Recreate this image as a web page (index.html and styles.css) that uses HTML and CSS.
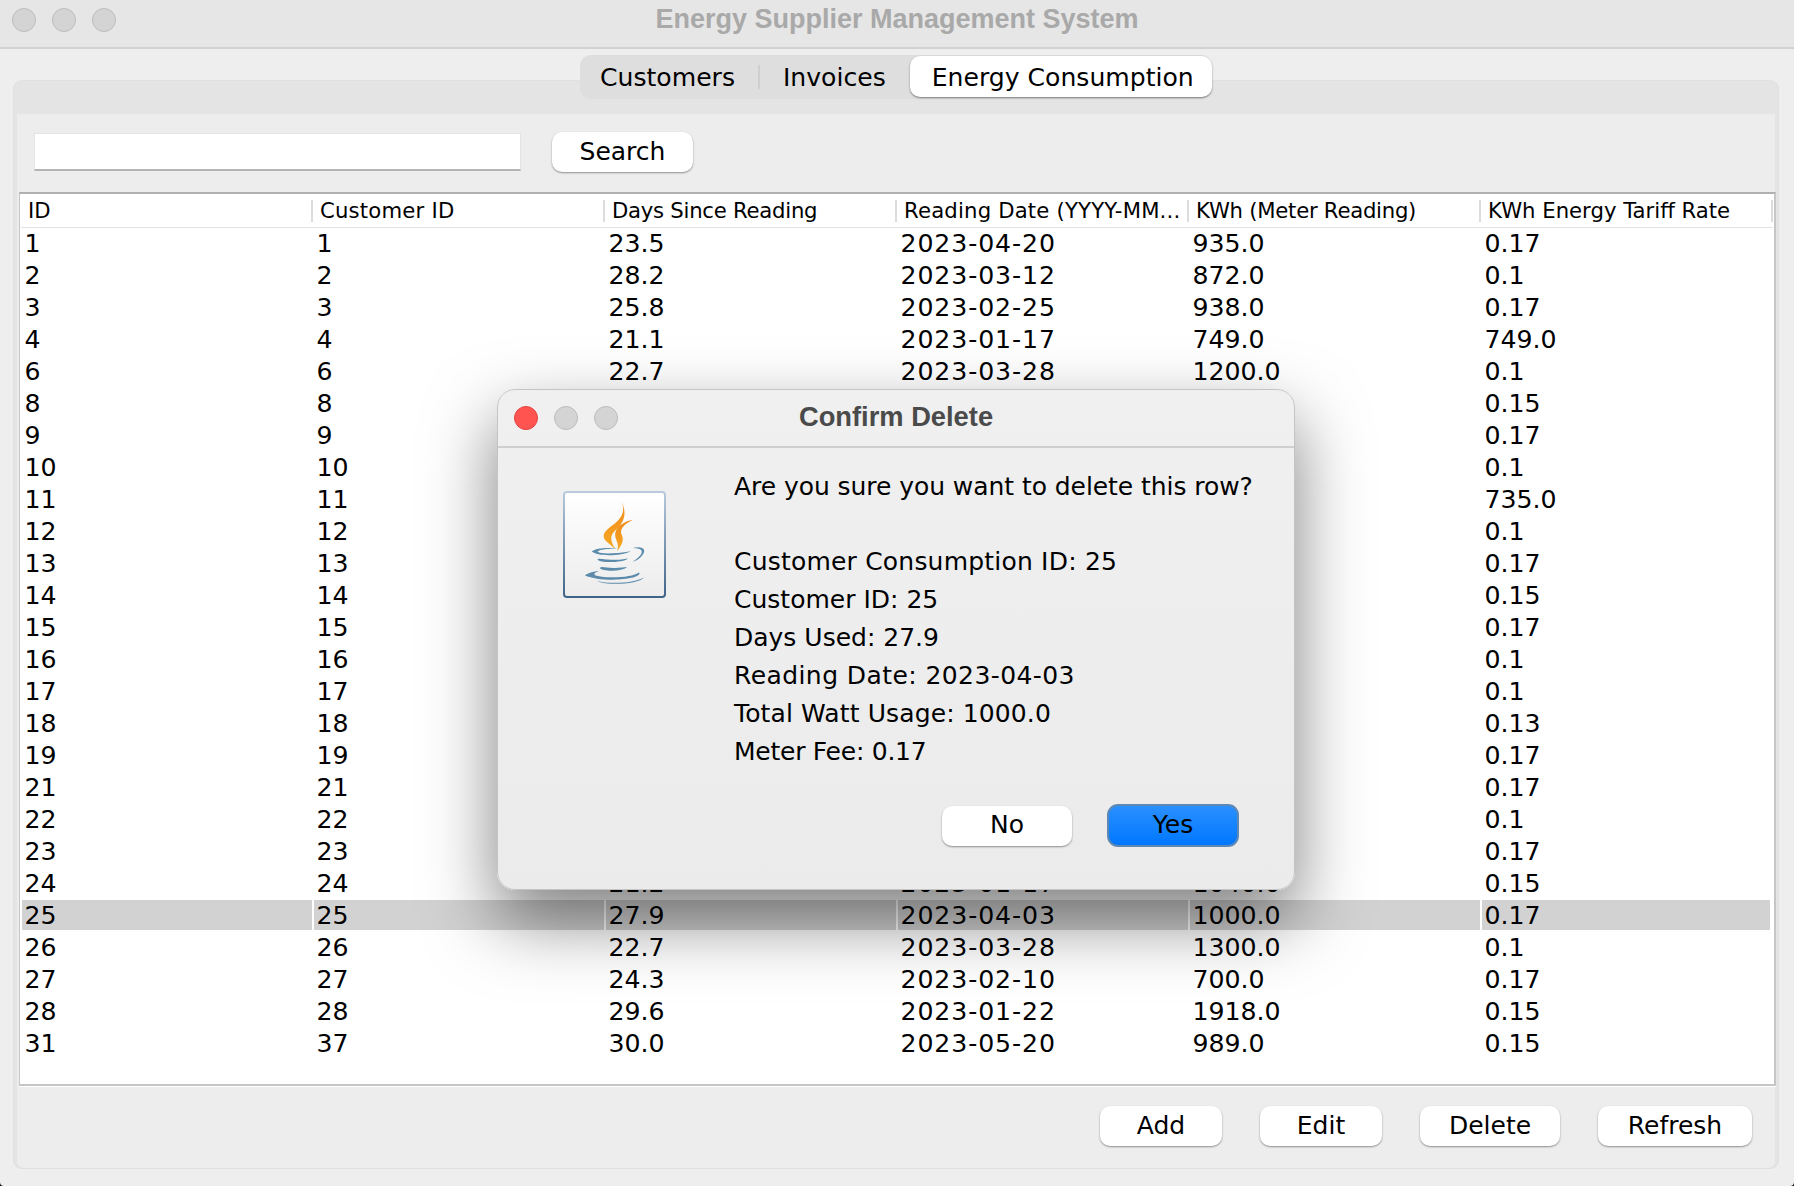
FILE: index.html
```html
<!DOCTYPE html>
<html lang="en">
<head>
<meta charset="utf-8">
<title>Energy Supplier Management System</title>
<link rel="stylesheet" href="styles.css">
</head>
<body>
<div class="window">
  <header class="titlebar">
    <div class="lights"><i class="light"></i><i class="light"></i><i class="light"></i></div>
    <div class="title">Energy Supplier Management System</div>
  </header>
  <div class="content">
    <nav class="tabs">
      <span class="tab">Customers</span>
      <span class="tab-sep"></span>
      <span class="tab">Invoices</span>
      <span class="tab active">Energy Consumption</span>
    </nav>
    <section class="panel">
      <div class="inner">
        <div class="searchbar">
          <div class="input"></div>
          <button class="btn search">Search</button>
        </div>
        <div class="tablewrap">
          <table class="grid">
            <thead>
              <tr><th>ID</th><th>Customer ID</th><th>Days Since Reading</th><th>Reading Date (YYYY-MM...</th><th>KWh (Meter Reading)</th><th>KWh Energy Tariff Rate</th></tr>
            </thead>
            <tbody>
              <tr><td>1</td><td>1</td><td>23.5</td><td>2023-04-20</td><td>935.0</td><td>0.17</td></tr>
              <tr><td>2</td><td>2</td><td>28.2</td><td>2023-03-12</td><td>872.0</td><td>0.1</td></tr>
              <tr><td>3</td><td>3</td><td>25.8</td><td>2023-02-25</td><td>938.0</td><td>0.17</td></tr>
              <tr><td>4</td><td>4</td><td>21.1</td><td>2023-01-17</td><td>749.0</td><td>749.0</td></tr>
              <tr><td>6</td><td>6</td><td>22.7</td><td>2023-03-28</td><td>1200.0</td><td>0.1</td></tr>
              <tr><td>8</td><td>8</td><td></td><td></td><td></td><td>0.15</td></tr>
              <tr><td>9</td><td>9</td><td></td><td></td><td></td><td>0.17</td></tr>
              <tr><td>10</td><td>10</td><td></td><td></td><td></td><td>0.1</td></tr>
              <tr><td>11</td><td>11</td><td></td><td></td><td></td><td>735.0</td></tr>
              <tr><td>12</td><td>12</td><td></td><td></td><td></td><td>0.1</td></tr>
              <tr><td>13</td><td>13</td><td></td><td></td><td></td><td>0.17</td></tr>
              <tr><td>14</td><td>14</td><td></td><td></td><td></td><td>0.15</td></tr>
              <tr><td>15</td><td>15</td><td></td><td></td><td></td><td>0.17</td></tr>
              <tr><td>16</td><td>16</td><td></td><td></td><td></td><td>0.1</td></tr>
              <tr><td>17</td><td>17</td><td></td><td></td><td></td><td>0.1</td></tr>
              <tr><td>18</td><td>18</td><td></td><td></td><td></td><td>0.13</td></tr>
              <tr><td>19</td><td>19</td><td></td><td></td><td></td><td>0.17</td></tr>
              <tr><td>21</td><td>21</td><td></td><td></td><td></td><td>0.17</td></tr>
              <tr><td>22</td><td>22</td><td></td><td></td><td></td><td>0.1</td></tr>
              <tr><td>23</td><td>23</td><td></td><td></td><td></td><td>0.17</td></tr>
              <tr><td>24</td><td>24</td><td>21.2</td><td>2023-01-17</td><td>1040.0</td><td>0.15</td></tr>
              <tr class="selected"><td>25</td><td>25</td><td>27.9</td><td>2023-04-03</td><td>1000.0</td><td>0.17</td></tr>
              <tr><td>26</td><td>26</td><td>22.7</td><td>2023-03-28</td><td>1300.0</td><td>0.1</td></tr>
              <tr><td>27</td><td>27</td><td>24.3</td><td>2023-02-10</td><td>700.0</td><td>0.17</td></tr>
              <tr><td>28</td><td>28</td><td>29.6</td><td>2023-01-22</td><td>1918.0</td><td>0.15</td></tr>
              <tr><td>31</td><td>37</td><td>30.0</td><td>2023-05-20</td><td>989.0</td><td>0.15</td></tr>
            </tbody>
          </table>
        </div>
        <div class="actions">
          <button class="btn add">Add</button>
          <button class="btn edit">Edit</button>
          <button class="btn delete">Delete</button>
          <button class="btn refresh">Refresh</button>
        </div>
      </div>
    </section>
  </div>

  <div class="dialog" role="dialog">
    <header class="dialog-title">
      <div class="lights"><i class="light close"></i><i class="light"></i><i class="light"></i></div>
      <div class="dialog-name">Confirm Delete</div>
    </header>
    <div class="dialog-body">
      <div class="java">
        <svg viewBox="0 0 300 318" width="99" height="104" aria-hidden="true">
          <defs>
            <linearGradient id="fl" x1="0" y1="0" x2="0" y2="1"><stop offset="0" stop-color="#ef8a1a"/><stop offset="1" stop-color="#f7a823"/></linearGradient>
          </defs>
          <path fill="url(#fl)" d="M170 24C186 56 170 78 150 94C128 110 106 126 123 146L153 172C138 148 134 132 152 115C172 98 194 68 170 24Z"/>
          <path fill="url(#fl)" d="M207 82C180 86 150 105 152 130C153 145 166 155 158 178C172 160 180 145 172 128C165 112 178 95 207 82Z"/>
          <g fill="#5b8aab">
            <path d="M80 179C95 168 130 166 165 171C135 170 105 172 98 180C110 187 150 186 200 178C170 193 100 195 80 179Z"/>
            <path d="M205 168C240 160 248 175 235 190C225 203 215 208 205 210C222 200 238 185 232 175C226 168 215 170 205 168Z"/>
            <path d="M98 204C100 197 115 205 150 204C170 204 185 201 192 200C180 212 110 216 98 204Z"/>
            <path d="M105 230C110 222 125 230 150 229C165 229 180 227 188 226C175 240 115 241 105 230Z"/>
            <path d="M60 252C66 246 85 240 105 238C90 243 84 248 92 252C130 263 205 258 225 243C232 248 215 261 170 264C130 267 85 263 60 252Z"/>
            <path d="M95 268C140 280 210 275 240 258C225 278 130 285 95 268Z"/>
          </g>
        </svg>
      </div>
      <div class="message">
        <p class="question">Are you sure you want to delete this row?</p>
        <p class="consumption">Customer Consumption ID: 25</p>
        <p>Customer ID: 25</p>
        <p>Days Used: 27.9</p>
        <p class="reading">Reading Date: 2023-04-03</p>
        <p class="usage">Total Watt Usage: 1000.0</p>
        <p class="fee">Meter Fee: 0.17</p>
      </div>
    </div>
    <div class="dialog-actions">
      <button class="btn no">No</button>
      <button class="btn yes">Yes</button>
    </div>
  </div>
</div>
</body>
</html>
```
FILE: styles.css
```css
* { box-sizing: border-box; }
html, body { margin: 0; height: 100%; background: #111; }
body { font-family: "DejaVu Sans", sans-serif; color: #000; overflow: hidden; }

.window {
  position: relative;
  width: 1794px;
  height: 1186px;
  background: #eeeeee;
  border-radius: 0 0 4px 4px;
  display: flex;
  flex-direction: column;
  overflow: hidden;
}

.titlebar {
  height: 49px;
  flex: none;
  background: #e6e6e6;
  border-bottom: 2px solid #d2d2d2;
  display: flex;
  align-items: center;
  justify-content: center;
}
.lights { display: flex; gap: 16px; }
.titlebar .lights { position: absolute; left: 12px; top: 8px; }
.light {
  display: block;
  width: 24px;
  height: 24px;
  border-radius: 50%;
  background: #d4d4d4;
  border: 1px solid #bcbcbc;
}
.light.close { background: #ff5450; border-color: #e4433f; }
.title {
  font: bold 27px "Liberation Sans", Arial, sans-serif;
  color: #a9a9a9;
  margin-bottom: 8px;
}

.content { flex: 1; display: flex; flex-direction: column; padding: 6px 15px 17px 13px; min-height: 0; }

.tabs {
  position: relative;
  z-index: 2;
  align-self: flex-start;
  margin-left: 567px;
  margin-bottom: -19px;
  height: 44px;
  width: 632px;
  display: flex;
  align-items: center;
  background: #dedede;
  border-radius: 11px;
  font-size: 25.1px;
  padding-left: 20px;
}
.tab { white-space: nowrap; }
.tab-sep { width: 2px; height: 24px; background: #cfcfcf; margin: 0 23px; }
.tab.active {
  margin-left: 24px;
  height: 41px;
  width: 302px;
  margin-right: -2px;
  padding: 1px 0 0 4px;
  background: #fff;
  border-radius: 10px;
  box-shadow: 0 1px 2px rgba(0,0,0,.45);
  display: flex;
  align-items: center;
  justify-content: center;
  margin-top: -1px;
}

.panel {
  flex: 1;
  display: flex;
  flex-direction: column;
  min-height: 0;
  background: #e4e4e4;
  border: 1px solid #e0e0e0;
  border-bottom-color: #dedede;
  border-radius: 9px;
  padding: 33px 3px 0 3px;
}
.inner {
  flex: 1;
  display: flex;
  flex-direction: column;
  min-height: 0;
  background: #ededed;
  border-radius: 0 0 7px 7px;
}

.searchbar {
  height: 78px;
  flex: none;
  display: flex;
  align-items: center;
  padding: 0 0 2px 17px;
}
.input {
  width: 487px;
  height: 38px;
  background: #fff;
  border: 1px solid #e4e4e4;
  border-bottom: 2px solid #b4b4b4;
}
.btn {
  font: 25px "DejaVu Sans", sans-serif;
  color: #000;
  background: #fff;
  border: 0;
  border-radius: 10px;
  height: 40px;
  padding: 0 0 2px;
  box-shadow: 0 1px 2px rgba(0,0,0,.4);
}
.search { width: 141px; margin-left: 31px; }

.tablewrap {
  height: 894px;
  flex: none;
  width: 1757px;
  margin-left: 2px;
  padding-left: 1px;
  background: #fff;
  border: 2px solid #c6c6c6;
  border-left-width: 1px;
  border-top-color: #b0b0b0;
  box-shadow: 0 1px 0 #fff;
  overflow: hidden;
}
.grid { table-layout: fixed; width: 1752px; border-collapse: separate; border-spacing: 0; }
.grid th {
  height: 34px;
  padding: 0 0 0 7px;
  font-weight: normal;
  font-size: 21.2px;
  text-align: left;
  white-space: nowrap;
  overflow: hidden;
  border-bottom: 1px solid #e2e2e2;
  background: linear-gradient(#dcdcdc, #dcdcdc) right center / 2px 22px no-repeat;
}
.grid th:nth-child(2) { letter-spacing: .2px; }
.grid th:nth-child(3), .grid th:nth-child(5) { letter-spacing: -.25px; }
.grid th:nth-child(4) { letter-spacing: .18px; }
.grid td {
  height: 32px;
  padding: 2px 0 0 2.5px;
  font-size: 25.2px;
  line-height: 28px;
  white-space: nowrap;
  border-left: 1px solid #fff;
  border-right: 1px solid #fff;
  border-bottom: 2px solid #fff;
  background-clip: padding-box;
}
.grid td:nth-child(4) { letter-spacing: .9px; }
.grid td:last-child { border-right-width: 3px; }
.selected td { background-color: #d2d2d2; }

.actions {
  flex: 1;
  display: flex;
  align-items: flex-start;
  padding: 20px 23px 0 0;
  justify-content: flex-end;
}
.add, .edit { width: 122px; margin-right: 38px; }
.delete { width: 140px; margin-right: 38px; }
.refresh { width: 154px; }

.dialog {
  position: absolute;
  left: 497px;
  top: 389px;
  width: 798px;
  height: 501px;
  background: linear-gradient(#f0f0f0, #ebebeb);
  border-radius: 18px;
  border: 1px solid #c4c4c4;
  box-shadow: 0 30px 70px rgba(0,0,0,.5);
  display: flex;
  flex-direction: column;
  z-index: 5;
}
.dialog-title {
  position: relative;
  height: 58px;
  flex: none;
  border-radius: 18px 18px 0 0;
  border-bottom: 2px solid #cfcfcf;
  display: flex;
  align-items: center;
  justify-content: center;
  padding-bottom: 2px;
}
.dialog-title .lights { position: absolute; left: 16px; top: 16px; }
.dialog-name { font: bold 27.3px "Liberation Sans", Arial, sans-serif; color: #4a4a4a; }
.dialog-body { flex: 1; display: flex; padding: 43px 0 0 65px; }
.java {
  width: 103px;
  height: 107px;
  flex: none;
  border: 2px solid transparent;
  border-radius: 4px;
  background: linear-gradient(#fff, #ececec) padding-box, linear-gradient(#b9cbdd, #3e6388) border-box;
  display: flex;
}
.message { margin-left: 68px; margin-top: -23px; font-size: 25px; line-height: 38px; }
.message p { margin: 0; white-space: nowrap; }
.message .question { margin-bottom: 37px; letter-spacing: -.06px; }
.message .consumption { letter-spacing: .2px; }
.message .reading { letter-spacing: .42px; }
.message .usage { letter-spacing: .12px; }
.message .fee { letter-spacing: -.25px; }
.dialog-actions { display: flex; align-items: center; padding: 0 0 42px 444px; flex: none; }
.no { width: 130px; height: 40px; }
.yes {
  width: 132px;
  height: 43px;
  margin-left: 35px;
  background: linear-gradient(#2a90ff, #0077ff);
  border: 2px solid #5e88b4;
  border-radius: 11px;
  box-shadow: none;
}
```
